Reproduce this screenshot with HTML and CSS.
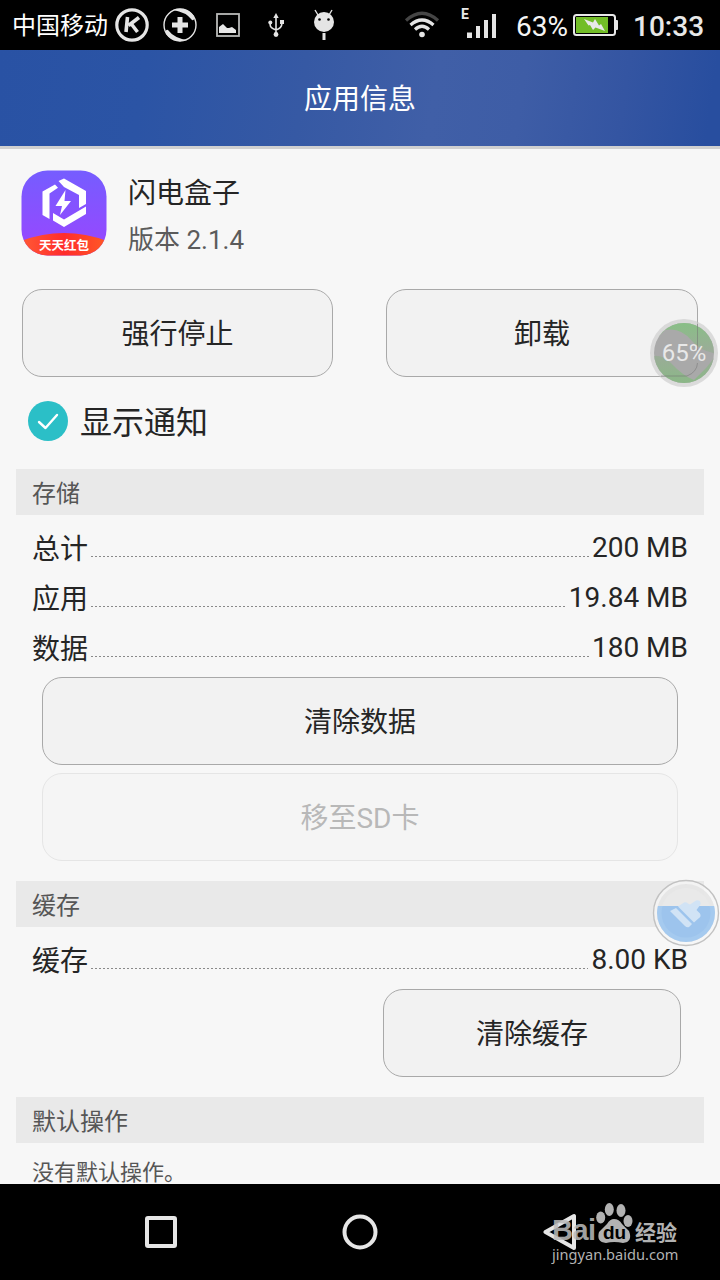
FILE: index.html
```html
<!DOCTYPE html>
<html lang="zh-CN">
<head>
<meta charset="utf-8">
<title>应用信息</title>
<link rel="stylesheet" href="styles.css">
</head>
<body>
<div class="screen">
  <header class="status">
    <span class="carrier">中国移动</span>
    <svg class="icon-k" width="34" height="34" viewBox="0 0 34 34"><circle cx="17" cy="17" r="15.2" fill="none" stroke="#e5e5e5" stroke-width="3.2"/><path d="M12.500 9l-1.500 15M24 9.500L13.500 17.500M16 15.500L22.500 24" fill="none" stroke="#e5e5e5" stroke-width="3.600"/></svg>
    <svg class="icon-plus" width="34" height="34" viewBox="0 0 34 34"><circle cx="17" cy="17" r="16" fill="none" stroke="#e5e5e5" stroke-width="1.400"/><path d="M10 2Q23-2 31 8Q32 13 29 12Q23 4 10 2ZM24 32Q11 36 3 26Q2 21 5 22Q11 30 24 32Z" fill="#e5e5e5"/><path d="M17 9v16M9 17h16" stroke="#e5e5e5" stroke-width="5"/></svg>
    <svg class="icon-image" width="24" height="24" viewBox="0 0 24 24"><rect x="1" y="1" width="22" height="22" fill="none" stroke="#b9bab8" stroke-width="1.800"/><path d="M3 20v-6l4-3 4 4h2l3-1 4 3v3z" fill="#e8e8e8"/></svg>
    <svg class="icon-usb" width="16" height="24" viewBox="0 0 16 24"><g fill="none" stroke="#e5e5e5" stroke-width="1.600"><path d="M8 4v18M2.200 9v3q0 3 5.800 5M13.800 9v2q0 4-5.800 6"/></g><path d="M8 0l2.700 5H5.300z" fill="#e5e5e5"/><circle cx="2.300" cy="9.500" r="2" fill="#e5e5e5"/><path d="M12 7h4v4h-4z" fill="#e5e5e5"/><circle cx="8" cy="21.500" r="2.400" fill="#e5e5e5"/></svg>
    <svg class="icon-droid" width="22" height="32" viewBox="0 0 22 32"><path d="M2 1l3 5M19 1l-3 5" stroke="#e5e5e5" stroke-width="1.400"/><circle cx="11" cy="13" r="10" fill="#e5e5e5"/><circle cx="6.500" cy="10.500" r="1.300"/><circle cx="15.500" cy="10.500" r="1.300"/><path d="M11 24v7" stroke="#e5e5e5" stroke-width="3"/></svg>
    <svg class="icon-wifi" width="36" height="28" viewBox="0 0 36 28"><g fill="none" stroke-width="3.200"><path d="M2 9.500Q18-5 34 9.500" stroke="#454545"/><path d="M6.500 14Q18 4 29.500 14" stroke="#e5e5e5"/><path d="M11 18.500Q18 12 25 18.500" stroke="#e5e5e5"/></g><circle cx="18" cy="23.500" r="2.800" fill="#e5e5e5"/></svg>
    <span class="signal"><span class="net">E</span><svg width="30" height="25" viewBox="0 0 30 25"><path d="M0 19.500h5v5.500H0zM9 13h4v12H9zM17 7h4v18h-4zM25 1h4v24h-4z" fill="#e5e5e5"/></svg></span>
    <span class="percent">63%</span>
    <svg class="icon-battery" width="45" height="22" viewBox="0 0 45 22"><rect x="1" y="1" width="41" height="20" rx="2.500" fill="none" stroke="#e8e8e8" stroke-width="2"/><path d="M42 6h2q1 0 1 1v8q0 1-1 1h-2z" fill="#e8e8e8"/><path d="M3 3h32v16H3z" fill="#72bd27"/><path d="M11 5l9 3.500L22 5l4 6.500 2-1.500 4 7-9.500-3.500L20 16l-3-5-1.500.500z" fill="#e8e8e8"/></svg>
    <span class="clock">10:33</span>
  </header>

  <div class="titlebar">应用信息</div>

  <main class="content">
    <section class="app">
      <svg class="app-icon" width="86" height="86" viewBox="0 0 86 86">
        <defs>
          <linearGradient id="purple" x1="0" y1="0" x2="0" y2="1"><stop offset="0" stop-color="#755dff"/><stop offset="1" stop-color="#9b45ff"/></linearGradient>
          <linearGradient id="red" x1="0" y1="0" x2="1" y2="0"><stop offset="0" stop-color="#ff5a35"/><stop offset=".5" stop-color="#ff2c2c"/><stop offset="1" stop-color="#ff5a25"/></linearGradient>
          <clipPath id="shape"><rect x=".5" y=".5" width="85" height="85" rx="26"/></clipPath>
        </defs>
        <g clip-path="url(#shape)">
          <path d="M0 0h86v86H0z" fill="url(#purple)"/>
          <path d="M0 71Q43 55 86 71V86H0z" fill="url(#red)"/>
        </g>
        <path d="M21.500 21.500L34 14.500 37 17.800 28.500 23.500V49L21.500 45ZM37.500 11L43 8.500 65 21V34L58 38V25L43 17ZM32 43L43 49.500 65 36.500V44L43 57 32 50.500Z" fill="#fff"/>
        <path d="M44.500 20L34.500 36H41L39 45 50 31H43.500z" fill="#fff"/>
        <text class="icon-label" x="43" y="79.500" text-anchor="middle">天天红包</text>
      </svg>
      <div class="app-text">
        <div class="app-name">闪电盒子</div>
        <div class="version">版本 2.1.4</div>
      </div>
    </section>

    <div class="actions">
      <button class="btn">强行停止</button>
      <button class="btn">卸载</button>
    </div>

    <div class="notify">
      <svg width="40" height="40" viewBox="0 0 40 40"><circle cx="20" cy="20" r="20" fill="#2bbfc7"/><path d="M11 21l6.500 6L29 14" fill="none" stroke="#fff" stroke-width="2.400" stroke-linecap="round" stroke-linejoin="round"/></svg>
      <span>显示通知</span>
    </div>

    <h2 class="section">存储</h2>
    <div class="rows">
      <div class="row"><span class="label">总计</span><i class="leader"></i><span class="value">200 MB</span></div>
      <div class="row"><span class="label">应用</span><i class="leader"></i><span class="value">19.84 MB</span></div>
      <div class="row"><span class="label">数据</span><i class="leader"></i><span class="value">180 MB</span></div>
    </div>
    <div class="storage-actions">
      <button class="btn">清除数据</button>
      <button class="btn disabled" disabled>移至SD卡</button>
    </div>

    <h2 class="section cache">缓存</h2>
    <div class="rows">
      <div class="row"><span class="label">缓存</span><i class="leader"></i><span class="value">8.00 KB</span></div>
    </div>
    <div class="cache-actions"><button class="btn">清除缓存</button></div>

    <h2 class="section defaults">默认操作</h2>
    <p class="empty">没有默认操作。</p>
  </main>

  <nav class="navbar">
    <svg class="nav-recent" width="32" height="32" viewBox="0 0 32 32"><rect x="2" y="2" width="28" height="28" rx="1" fill="none" stroke="#e6e6e6" stroke-width="4"/></svg>
    <svg class="nav-home" width="36" height="36" viewBox="0 0 36 36"><circle cx="18" cy="18" r="15.500" fill="none" stroke="#e6e6e6" stroke-width="4"/></svg>
    <svg class="nav-back" width="34" height="38" viewBox="0 0 34 38"><path d="M31 3v32L2.500 19z" fill="none" stroke="#e6e6e6" stroke-width="4" stroke-linejoin="round"/></svg>
  </nav>

  <svg class="memory-ball" width="70" height="70" viewBox="0 0 70 70">
    <defs><clipPath id="mem"><circle cx="35" cy="35" r="30"/></clipPath>
    <linearGradient id="green" x1="0" y1="0" x2="0" y2="1"><stop offset="0" stop-color="#7fc77c"/><stop offset=".5" stop-color="#9aab97"/><stop offset="1" stop-color="#82bd7d"/></linearGradient></defs>
    <circle cx="35" cy="35" r="34" fill="#c8c8c8" fill-opacity=".6"/>
    <g clip-path="url(#mem)"><path d="M5 5h60v60H5z" fill="#a6a6a6" fill-opacity=".95"/>
    <path d="M0 0H70V36Q52 34 43 23Q32 9 16 12L5 23ZM0 39Q12 35 22 45Q34 58 45 62L57 50 65 40V70H0Z" fill="url(#green)" fill-opacity=".85"/></g>
    <path d="M48.500 6V32M48.500 45Q48 54 38 58H12" fill="none" stroke="#727272" stroke-opacity=".5"/>
    <text class="ball-text" x="35" y="43" text-anchor="middle">65%</text>
  </svg>

  <svg class="clean-ball" width="68" height="68" viewBox="0 0 68 68">
    <defs><clipPath id="water"><path d="M0 27h68v41H0z"/></clipPath></defs>
    <circle cx="34" cy="34" r="32.500" fill="#f7f7f7" fill-opacity=".72" stroke="#c2c2c2" stroke-width="1.400"/>
    <circle cx="34" cy="34" r="29" fill="#e2e2e2" fill-opacity=".8"/>
    <circle cx="34" cy="34" r="25" fill="#e9e9e9"/>
    <circle cx="34" cy="34" r="29" fill="#a5caef" clip-path="url(#water)"/>
    <circle cx="34" cy="34" r="24.500" fill="#9dc4ed" clip-path="url(#water)"/>
    <path d="M26 27.500L32 23.500Q34 22.500 36 24.500L38 25.500 44 21.500Q49 20.500 48.500 25.500L44.500 31 48 34.500Q49.500 37.500 47 39L42 43.500ZM24 29L40 45 37 48Q35 49 33 47L18 32Z" fill="#d1e3f5"/>
  </svg>

  <div class="watermark">
    <div class="brand"><span class="bai">Bai</span><span class="paw"><svg width="38" height="41" viewBox="0 0 38 41"><g fill="#bababa"><ellipse cx="5.700" cy="15.500" rx="4.500" ry="6"/><ellipse cx="14.300" cy="7.500" rx="4.500" ry="6.500"/><ellipse cx="26" cy="8.500" rx="4.500" ry="6.500"/><ellipse cx="33" cy="19" rx="4.500" ry="6"/><path d="M19 17Q24 17 27 22L34 29Q38 40 28 41Q19 39 11 41Q1 40 4 30L12 22Q15 17 19 17Z"/></g></svg><span class="du">du</span></span><span class="jy">经验</span></div>
    <div class="site">jingyan.baidu.com</div>
  </div>
</div>
</body>
</html>
```
FILE: styles.css
```css
* { box-sizing: border-box; }
body { margin: 0; background: #f7f7f7; font-family: Roboto, "Noto Sans CJK SC", sans-serif; color: #252525; }
.screen { position: relative; display: flex; flex-direction: column; width: 720px; height: 1280px; overflow: hidden; }
svg { display: block; flex: none; }

.status { display: flex; align-items: center; flex: none; height: 50px; padding-left: 12px; background: #000; color: #e8e8e8; white-space: nowrap; }
.carrier { width: 96px; padding-top: 3px; font-size: 24px; line-height: 47px; color: #fff; }
.icon-k { margin-left: 7px; }
.icon-plus { margin-left: 14px; }
.icon-image { margin-left: 19px; }
.icon-usb { margin-left: 28px; }
.icon-droid { margin-left: 29px; }
.icon-wifi { margin-left: 69px; }
.signal { display: flex; align-items: flex-start; width: 37px; height: 32px; margin-left: 21px; }
.net { width: 6px; font-size: 14px; line-height: 11px; font-weight: 700; }
.signal svg { margin-top: 4px; }
.percent { width: 52px; padding-top: 2px; margin-left: 18px; font-size: 28px; color: #f4f4f4; }
.icon-battery { margin-left: 5px; }
.clock { margin-left: 15px; padding-top: 2px; font-size: 28px; font-weight: 500; }

.titlebar { flex: none; height: 99px; padding-top: 2px; border-bottom: 3px solid #d0d0d0; background: linear-gradient(98deg, #2952a4 0%, #2b54a5 20%, #3659a4 42%, #405fa7 60%, #3e5da6 72%, #3455a2 86%, #284e9f 98%); color: #fff; font-size: 28px; line-height: 96px; text-align: center; }

.content { display: flex; flex-direction: column; flex: 1; min-height: 0; padding: 0 16px; overflow: hidden; }
.app { display: flex; flex: none; height: 140px; padding: 21px 0 0 5px; }
.icon-label { font: 700 12.5px "Noto Sans CJK SC", sans-serif; fill: #fff; }
.app-text { margin-left: 21px; }
.app-name { padding-top: 2px; font-size: 28px; line-height: 44px; }
.version { margin-top: 2px; font-size: 26px; line-height: 45px; color: #5b5b5b; }

.btn { display: block; flex: none; height: 88px; padding: 4px 0 0; border: 1px solid #a9a9a9; border-radius: 20px; background: #f2f2f2; color: #252525; font: 28px/82px Roboto, "Noto Sans CJK SC", sans-serif; text-align: center; }
.actions { display: grid; flex: none; grid-template-columns: 311px 312px; column-gap: 53px; padding-left: 6px; }
.notify { display: flex; flex: none; align-items: center; gap: 12px; height: 92px; padding: 0 0 4px 12px; font-size: 32px; }
.notify span { padding-bottom: 2px; }

.section { flex: none; height: 46px; margin: 0; padding: 2px 0 0 16px; background: #e9e9e9; color: #565656; font-size: 24px; font-weight: 400; line-height: 46px; }
.rows { flex: none; padding: 8px 16px 0; }
.row { display: flex; height: 50px; font-size: 28px; white-space: nowrap; }
.label { line-height: 53px; }
.value { line-height: 50px; }
.leader { flex: 1; height: 1px; margin: 33px 3px 0; background: repeating-linear-gradient(90deg, #8a8a8a 0 2px, transparent 2px 4px); }
.storage-actions { display: flex; flex: none; flex-direction: column; gap: 8px; padding: 4px 26px 20px; }
.disabled { border-color: #e5e5e5; background: #f5f5f5; color: #b8b8b8; }
.cache-actions { display: flex; flex: none; justify-content: flex-end; padding: 4px 23px 20px 0; }
.cache-actions .btn { width: 298px; }
.empty { flex: none; margin: 5px 0 0 16px; color: #565656; font-size: 22px; line-height: 50px; }

.navbar { display: flex; flex: none; align-items: center; height: 96px; padding-left: 145px; background: #000; }
.nav-home { margin-left: 165px; }
.nav-back { margin-left: 165px; }

.memory-ball { position: absolute; top: 318px; left: 649px; }
.ball-text { font: 24px Roboto, sans-serif; fill: #e8e8e8; }
.clean-ball { position: absolute; top: 879px; left: 652px; }

.watermark { position: absolute; top: 1202px; left: 552px; width: 132px; color: #bababa; opacity: .96; }
.brand { display: flex; align-items: flex-end; height: 41px; }
.bai { width: 43px; font: 700 29px/25px "Liberation Sans", sans-serif; letter-spacing: -.5px; opacity: .9; }
.paw { position: relative; width: 38px; }
.du { position: absolute; left: 8px; bottom: -1px; color: #000; font: 700 19px/22px "Liberation Sans", sans-serif; }
.jy { margin-left: 2px; font-size: 21px; line-height: 20px; font-weight: 700; }
.site { margin-top: 1px; font: 14.6px/20px "Noto Sans", sans-serif; white-space: nowrap; }
```
